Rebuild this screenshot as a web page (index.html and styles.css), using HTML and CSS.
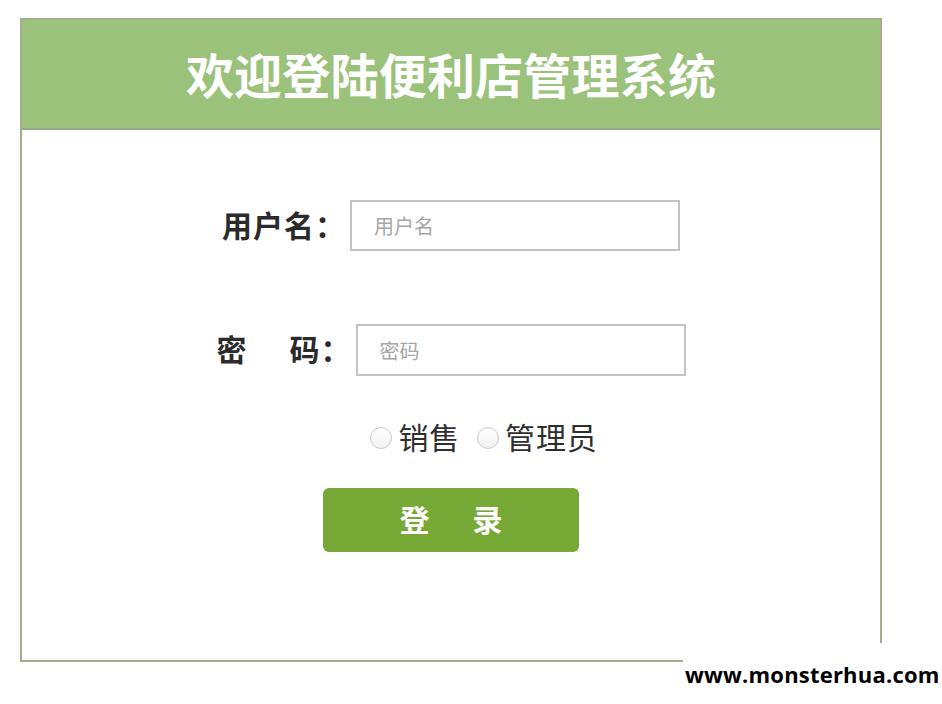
FILE: index.html
```html
<!DOCTYPE html>
<html lang="zh-CN">
<head>
<meta charset="utf-8">
<title>欢迎登陆便利店管理系统</title>
<link rel="stylesheet" href="styles.css">
</head>
<body>
<div class="panel">
  <div class="header"><h1 class="title">欢迎登陆便利店管理系统</h1></div>
  <form class="form">
    <div class="row row-user">
      <label class="label">用户名：</label>
      <input class="field" type="text" placeholder="用户名">
    </div>
    <div class="row row-pass">
      <label class="label">密<span class="gap"></span>码：</label>
      <input class="field" type="password" placeholder="密码">
    </div>
    <div class="roles">
      <label class="role"><input class="radio" type="radio" name="role">销售</label>
      <label class="role"><input class="radio" type="radio" name="role">管理员</label>
    </div>
    <button class="submit" type="button">登<span class="btn-gap"></span>录</button>
  </form>
</div>
<div class="watermark">www.monsterhua.com</div>
</body>
</html>
```
FILE: styles.css
```css
html, body {
  margin: 0;
  padding: 0;
  background: #ffffff;
  font-family: "Noto Sans CJK SC", "Noto Sans", sans-serif;
}
body {
  width: 942px;
  height: 704px;
  position: relative;
  overflow: hidden;
}
.panel {
  margin: 18px 0 0 20px;
  width: 858px;
  height: 640px;
  border: 2px solid #a4ad8e;
  display: flex;
  flex-direction: column;
}
.header {
  height: 108px;
  background: #9bc27a;
  border-bottom: 2px solid #98a98a;
  display: flex;
  align-items: center;
  justify-content: center;
}
.title {
  margin: 0;
  padding-bottom: 2px;
  color: #ffffff;
  font-size: 48px;
  font-weight: 700;
  line-height: 1;
  letter-spacing: 0.2px;
}
.form {
  display: flex;
  flex-direction: column;
  align-items: center;
  padding-top: 70px;
}
.row {
  display: flex;
  align-items: center;
  height: 51px;
}
.row-pass {
  margin-top: 73px;
  height: 52px;
}
.label {
  font-size: 30px;
  font-weight: 700;
  color: #2b2b2b;
  line-height: 1;
  margin-right: 4px;
  display: flex;
  align-items: center;
  padding-bottom: 4px;
  letter-spacing: 1px;
}
.gap {
  display: inline-block;
  width: 42px;
}
.field {
  box-sizing: border-box;
  width: 330px;
  height: 100%;
  border: 2px solid #c3c3c3;
  padding: 0 0 0 22px;
  font-family: "Noto Sans CJK SC", sans-serif;
  font-size: 20px;
  color: #333;
  outline: none;
  background: #fff;
}
.field::placeholder {
  color: #a6a6a6;
}
.roles {
  margin-top: 44px;
  height: 32px;
  display: flex;
  align-items: center;
  gap: 17px;
  padding-left: 66px;
}
.role {
  display: flex;
  align-items: center;
  font-size: 30px;
  line-height: 1;
  color: #2e2e2e;
  letter-spacing: 0.8px;
}
.radio {
  -webkit-appearance: none;
  appearance: none;
  width: 22px;
  height: 22px;
  margin: 4px 6px 0 0;
  border-radius: 50%;
  border: 1px solid #c9c9c9;
  background: linear-gradient(#ffffff, #f1f1f1);
  box-sizing: border-box;
}
.submit {
  margin-top: 36px;
  width: 256px;
  height: 64px;
  border: none;
  border-radius: 6px;
  background: #76a935;
  color: #ffffff;
  font-family: "Noto Sans CJK SC", sans-serif;
  font-size: 30px;
  font-weight: 700;
  line-height: 1;
  display: flex;
  align-items: center;
  justify-content: center;
  padding: 0 0 4px 0;
}
.btn-gap {
  display: inline-block;
  width: 43px;
}
.watermark {
  position: absolute;
  left: 683px;
  top: 643px;
  width: 259px;
  height: 61px;
  background: #ffffff;
  color: #000000;
  font-family: "Open Sans", "DejaVu Sans", sans-serif;
  font-weight: 700;
  font-size: 22px;
  letter-spacing: 0.2px;
  line-height: 1;
  box-sizing: border-box;
  padding: 20px 0 0 2px;
  white-space: nowrap;
}
```
